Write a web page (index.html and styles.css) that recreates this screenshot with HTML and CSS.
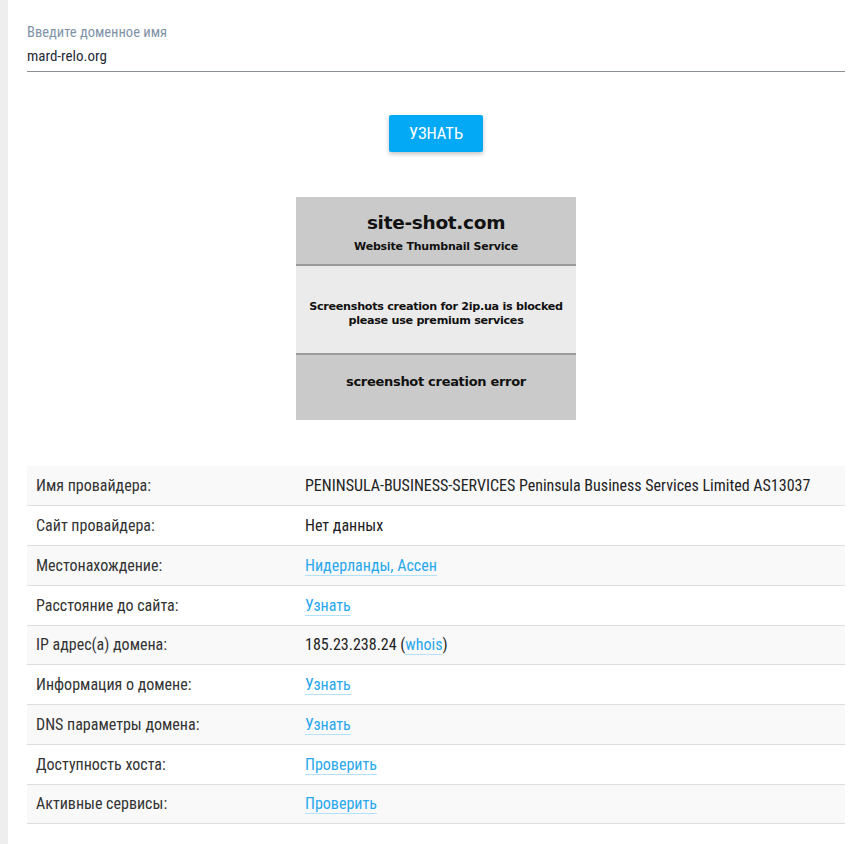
FILE: index.html
```html
<!DOCTYPE html>
<html lang="ru">
<head>
<meta charset="utf-8">
<title>2ip</title>
<link rel="stylesheet" href="styles.css">
</head>
<body>
<div class="page">
  <div class="strip"></div>
  <main class="content">
    <div class="field">
      <label class="field-label">Введите доменное имя</label>
      <div class="field-input">mard-relo.org</div>
    </div>
    <div class="actions">
      <button class="btn">УЗНАТЬ</button>
    </div>
    <div class="shot-wrap">
      <div class="shot">
        <div class="shot-top">
          <div class="shot-title">site-shot.com</div>
          <div class="shot-sub">Website Thumbnail Service</div>
        </div>
        <div class="shot-mid">
          <div>Screenshots creation for 2ip.ua is blocked</div>
          <div>please use premium services</div>
        </div>
        <div class="shot-bot">screenshot creation error</div>
      </div>
    </div>
    <table class="info">
      <tr><td class="k">Имя провайдера:</td><td class="v">PENINSULA-BUSINESS-SERVICES Peninsula Business Services Limited AS13037</td></tr>
      <tr><td class="k">Сайт провайдера:</td><td class="v">Нет данных</td></tr>
      <tr><td class="k">Местонахождение:</td><td class="v"><a class="lnk" href="#">Нидерланды, Ассен</a></td></tr>
      <tr><td class="k">Расстояние до сайта:</td><td class="v"><a class="lnk" href="#">Узнать</a></td></tr>
      <tr><td class="k">IP адрес(а) домена:</td><td class="v">185.23.238.24 (<a class="lnk" href="#">whois</a>)</td></tr>
      <tr><td class="k">Информация о домене:</td><td class="v"><a class="lnk" href="#">Узнать</a></td></tr>
      <tr><td class="k">DNS параметры домена:</td><td class="v"><a class="lnk" href="#">Узнать</a></td></tr>
      <tr><td class="k">Доступность хоста:</td><td class="v"><a class="lnk" href="#">Проверить</a></td></tr>
      <tr><td class="k">Активные сервисы:</td><td class="v"><a class="lnk" href="#">Проверить</a></td></tr>
    </table>
  </main>
</div>
</body>
</html>
```
FILE: styles.css
```css
html, body {
  margin: 0;
  padding: 0;
  background: #fff;
}
body {
  font-family: "Roboto Condensed", Roboto, "Liberation Sans", sans-serif;
  color: #222;
}
.page {
  display: flex;
  min-height: 844px;
}
.strip {
  width: 8px;
  flex: none;
  background: #eeeeee;
}
.content {
  flex: 1;
  padding: 24px 5px 0 19px;
}
.field {
  display: flex;
  flex-direction: column;
  border-bottom: 1px solid #8a9096;
  padding-bottom: 6px;
}
.field-label {
  font-size: 14.5px;
  line-height: 17px;
  color: #7f93a8;
}
.field-input {
  font-size: 15px;
  line-height: 18px;
  margin-top: 6px;
  color: #1e2a36;
}
.actions {
  display: flex;
  justify-content: center;
  padding-top: 43px;
}
.btn {
  width: 94px;
  height: 37px;
  border: 0;
  border-radius: 2px;
  background: #03a9f4;
  color: #fff;
  font-family: inherit;
  font-size: 16.5px;
  box-shadow: 0 2px 4px rgba(0,0,0,0.25);
  padding: 0;
}
.shot-wrap {
  display: flex;
  justify-content: center;
  padding-top: 45px;
}
.shot {
  width: 280px;
  display: flex;
  flex-direction: column;
  font-family: "DejaVu Sans", "Open Sans", sans-serif;
  font-weight: bold;
  color: #111;
  text-align: center;
}
.shot-top {
  height: 69px;
  background: #cacaca;
  border-bottom: 2px solid #9a9a9a;
  box-sizing: border-box;
  padding-top: 15px;
}
.shot-title {
  font-size: 18.5px;
  line-height: 22px;
  letter-spacing: -0.3px;
}
.shot-sub {
  font-size: 11px;
  line-height: 14px;
  margin-top: 6px;
  letter-spacing: -0.2px;
}
.shot-mid {
  height: 89px;
  background: #ebebeb;
  border-bottom: 2px solid #9a9a9a;
  box-sizing: border-box;
  padding-top: 34px;
  font-size: 11.2px;
  line-height: 14px;
  letter-spacing: -0.3px;
}
.shot-bot {
  height: 65px;
  background: #cacaca;
  box-sizing: border-box;
  padding-top: 19px;
  font-size: 13px;
  line-height: 16px;
  letter-spacing: -0.3px;
}
.info {
  width: 100%;
  border-collapse: collapse;
  margin-top: 46px;
  font-size: 16px;
}
.info tr {
  height: 39.75px;
  border-bottom: 1px solid #dedede;
}
.info tr:nth-child(odd) {
  background: #f9f9f9;
}
.info td {
  padding: 0 9px;
  vertical-align: middle;
}
.k {
  width: 251px;
  color: #333;
}
.v {
  color: #222;
}
.lnk {
  color: #29a8ee;
  text-decoration: none;
  border-bottom: 1px solid #b3e0fb;
}
```
